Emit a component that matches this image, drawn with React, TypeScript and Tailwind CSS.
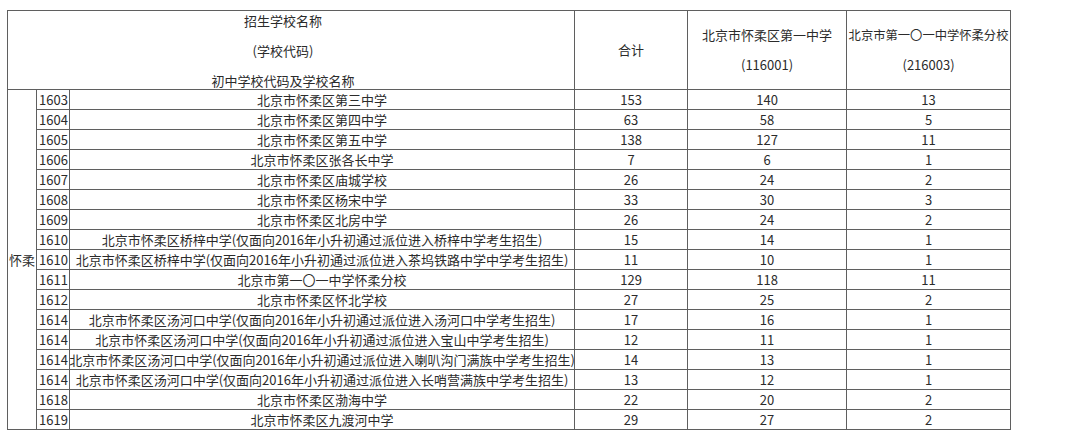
import React from "react";

type Row = [string, string, number, number, number];

const rows: Row[] = [
  ["1603", "北京市怀柔区第三中学", 153, 140, 13],
  ["1604", "北京市怀柔区第四中学", 63, 58, 5],
  ["1605", "北京市怀柔区第五中学", 138, 127, 11],
  ["1606", "北京市怀柔区张各长中学", 7, 6, 1],
  ["1607", "北京市怀柔区庙城学校", 26, 24, 2],
  ["1608", "北京市怀柔区杨宋中学", 33, 30, 3],
  ["1609", "北京市怀柔区北房中学", 26, 24, 2],
  ["1610", "北京市怀柔区桥梓中学(仅面向2016年小升初通过派位进入桥梓中学考生招生)", 15, 14, 1],
  ["1610", "北京市怀柔区桥梓中学(仅面向2016年小升初通过派位进入茶坞铁路中学中学考生招生)", 11, 10, 1],
  ["1611", "北京市第一〇一中学怀柔分校", 129, 118, 11],
  ["1612", "北京市怀柔区怀北学校", 27, 25, 2],
  ["1614", "北京市怀柔区汤河口中学(仅面向2016年小升初通过派位进入汤河口中学考生招生)", 17, 16, 1],
  ["1614", "北京市怀柔区汤河口中学(仅面向2016年小升初通过派位进入宝山中学考生招生)", 12, 11, 1],
  ["1614", "北京市怀柔区汤河口中学(仅面向2016年小升初通过派位进入喇叭沟门满族中学考生招生)", 14, 13, 1],
  ["1614", "北京市怀柔区汤河口中学(仅面向2016年小升初通过派位进入长哨营满族中学考生招生)", 13, 12, 1],
  ["1618", "北京市怀柔区渤海中学", 22, 20, 2],
  ["1619", "北京市怀柔区九渡河中学", 29, 27, 2],
];

const cell = "border border-[#5f5f5f] p-0";

export default function App() {
  return (
    <div
      className="w-[1080px] h-[430px] overflow-hidden bg-white text-[#2b2b2b] text-[13px]"
      style={{ fontFamily: '"Noto Sans CJK SC", "Noto Sans", sans-serif' }}
    >
      <table className="ml-[7px] mt-[10px] w-[1003px] table-fixed border-collapse">
        <colgroup>
          <col className="w-[29px]" />
          <col className="w-[33px]" />
          <col className="w-[505px]" />
          <col className="w-[113px]" />
          <col className="w-[159px]" />
          <col className="w-[164px]" />
        </colgroup>
        <thead>
          <tr className="h-[79px]">
            {/* 招生学校名称 header spans the three left columns */}
            <th colSpan={3} className={`${cell} align-top font-normal`}>
              <div className="h-[78px] flex flex-col items-center pr-[16px] overflow-hidden">
                <div className="leading-[20px]">招生学校名称</div>
                <div className="leading-[20px] mt-[10px]">(学校代码)</div>
                <div className="leading-[20px] mt-[10px]">初中学校代码及学校名称</div>
              </div>
            </th>
            <th className={`${cell} font-normal`}>合计</th>
            <th className={`${cell} font-normal`}>
              <div className="flex flex-col items-center">
                <div className="leading-[30px]">北京市怀柔区第一中学</div>
                <div className="leading-[30px]">(116001)</div>
              </div>
            </th>
            <th className={`${cell} font-normal`}>
              <div className="flex flex-col items-center">
                <div className="leading-[30px] whitespace-nowrap text-[12.3px]">北京市第一〇一中学怀柔分校</div>
                <div className="leading-[30px]">(216003)</div>
              </div>
            </th>
          </tr>
        </thead>
        <tbody>
          {rows.map(([code, name, total, a, b], i) => (
            <tr key={i} className="h-[20px] leading-[18px]">
              {i === 0 && (
                <td rowSpan={rows.length} className={`${cell} text-center align-middle`}>
                  <span className="whitespace-nowrap">怀柔</span>
                </td>
              )}
              <td className={`${cell} pl-[2px] whitespace-nowrap overflow-hidden`}>{code}</td>
              <td className={cell}>
                <div className="flex justify-center overflow-hidden whitespace-nowrap">
                  <span>{name}</span>
                </div>
              </td>
              <td className={`${cell} text-center`}>{total}</td>
              <td className={`${cell} text-center`}>{a}</td>
              <td className={`${cell} text-center`}>{b}</td>
            </tr>
          ))}
        </tbody>
      </table>
    </div>
  );
}
